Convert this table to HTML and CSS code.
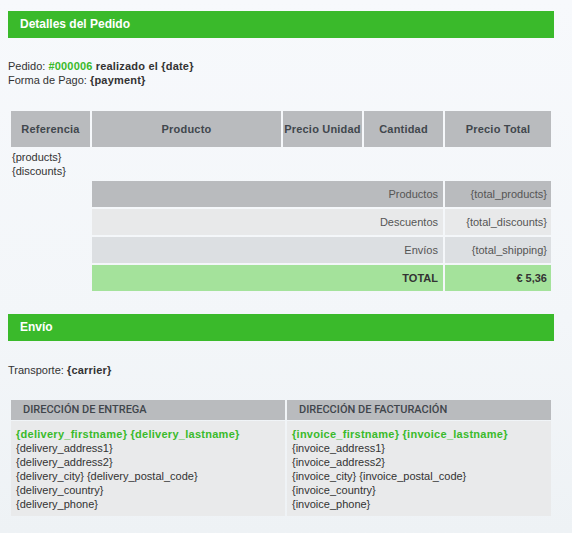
FILE: index.html
```html
<!DOCTYPE html>
<html lang="es">
<head>
<meta charset="utf-8">
<title>Detalles del Pedido</title>
<link rel="stylesheet" href="styles.css">
</head>
<body>
<div class="page">
  <h2 class="bar">Detalles del Pedido</h2>
  <div class="info">
    <div>Pedido: <b class="green">#000006</b> <b>realizado el {date}</b></div>
    <div>Forma de Pago: <b>{payment}</b></div>
  </div>

  <div class="grid">
    <div class="th">Referencia</div>
    <div class="th">Producto</div>
    <div class="th">Precio Unidad</div>
    <div class="th">Cantidad</div>
    <div class="th">Precio Total</div>

    <div class="products">{products}<br>{discounts}</div>

    <div class="tl r1">Productos</div><div class="tv r1">{total_products}</div>
    <div class="tl r2">Descuentos</div><div class="tv r2">{total_discounts}</div>
    <div class="tl r3">Envíos</div><div class="tv r3">{total_shipping}</div>
    <div class="tl r4 strong">TOTAL</div><div class="tv r4 strong">€ 5,36</div>
  </div>

  <h2 class="bar bar2">Envío</h2>
  <div class="info transport">Transporte: <b>{carrier}</b></div>

  <div class="addr">
    <div class="ah">DIRECCIÓN DE ENTREGA</div>
    <div class="ah">DIRECCIÓN DE FACTURACIÓN</div>
    <div class="ab">
      <b class="name">{delivery_firstname} {delivery_lastname}</b><br>
      {delivery_address1}<br>
      {delivery_address2}<br>
      {delivery_city} {delivery_postal_code}<br>
      {delivery_country}<br>
      {delivery_phone}
    </div>
    <div class="ab">
      <b class="name">{invoice_firstname} {invoice_lastname}</b><br>
      {invoice_address1}<br>
      {invoice_address2}<br>
      {invoice_city} {invoice_postal_code}<br>
      {invoice_country}<br>
      {invoice_phone}
    </div>
  </div>
</div>
</body>
</html>
```
FILE: styles.css
```css
html, body {
  margin: 0;
  padding: 0;
}
body {
  background: linear-gradient(180deg, #f7f9fc 0%, #f3f6f9 60%, #eef2f5 100%);
  min-height: 533px;
  font-family: "Liberation Sans", Arial, sans-serif;
  font-size: 11px;
  line-height: 14px;
  color: #333;
}
.page {
  padding: 11px 0 0 8px;
  width: 546px;
}
.bar {
  margin: 0;
  height: 27px;
  line-height: 27px;
  padding-left: 12px;
  background: #3aba2b;
  color: #fff;
  font-size: 12px;
  font-weight: bold;
}
.bar2 {
  margin-top: 23px;
}
.info {
  margin-top: 21px;
}
.info b {
  color: #333;
  letter-spacing: 0.2px;
}
.info b.green {
  color: #3aba2b;
}
.transport {
  margin-top: 22px;
}
.grid {
  margin: 24px 0 0 3px;
  display: grid;
  grid-template-columns: 79px 189px 79px 79px 106px;
  column-gap: 2px;
}
.th {
  background: #b9bbbe;
  height: 36px;
  display: flex;
  align-items: center;
  justify-content: center;
  font-weight: bold;
  color: #41474d;
  letter-spacing: 0.2px;
}
.products {
  grid-column: 1 / -1;
  padding: 3px 0 3px 1px;
}
.tl, .tv {
  height: 26px;
  line-height: 26px;
  text-align: right;
  margin-bottom: 2px;
  color: #555;
}
.tl {
  grid-column: 2 / 5;
  padding-right: 5px;
}
.tv {
  padding-right: 4px;
}
.r1 { background: #b9bbbe; }
.r2 { background: #e8e9ea; }
.r3 { background: #dcdfe2; }
.r4 { background: #a4e29b; margin-bottom: 0; }
.strong {
  font-weight: bold;
  color: #333;
}
.addr {
  margin: 23px 0 0 3px;
  display: grid;
  grid-template-columns: 274px 264px;
  column-gap: 2px;
  row-gap: 1px;
}
.ah {
  background: #b9bbbe;
  height: 20px;
  line-height: 20px;
  padding-left: 12px;
  font-family: Roboto, "Liberation Sans", sans-serif;
  font-weight: 500;
  font-size: 11px;
  color: #3f454b;
}
.ab {
  background: #e9eaeb;
  padding: 6px 5px 5px 5px;
  color: #333;
}
.name {
  color: #3aba2b;
  letter-spacing: 0.27px;
}
```
